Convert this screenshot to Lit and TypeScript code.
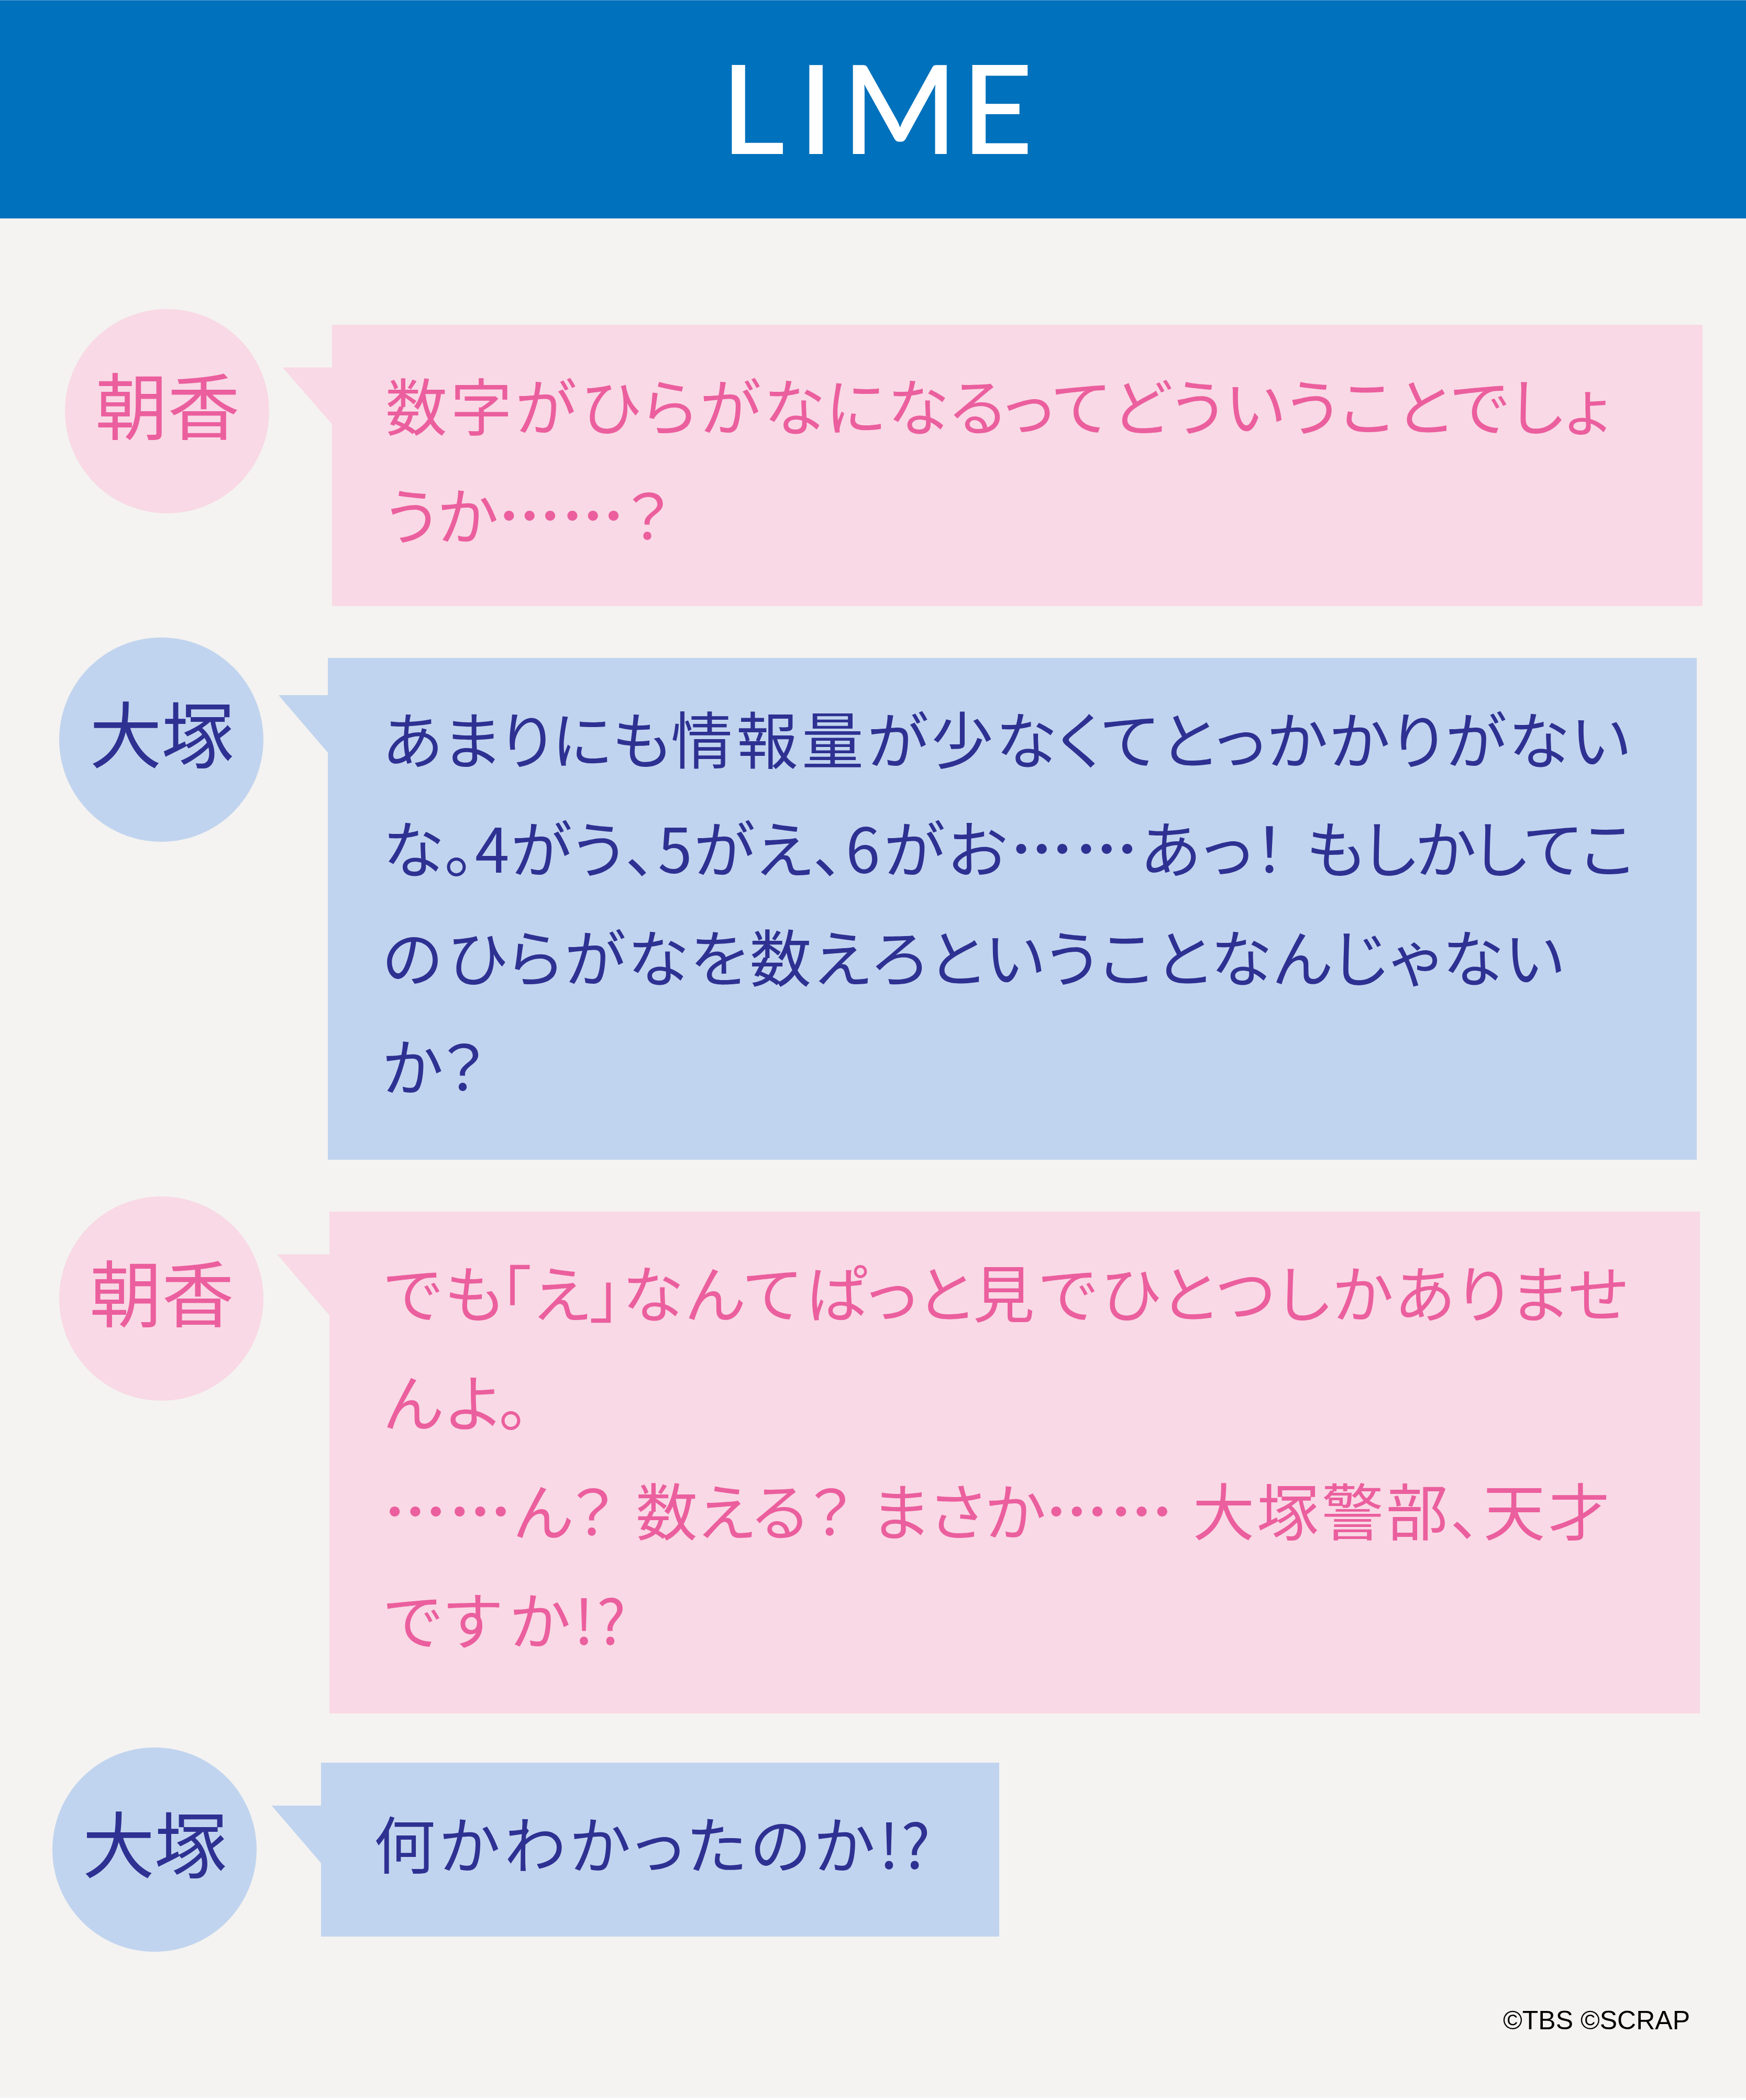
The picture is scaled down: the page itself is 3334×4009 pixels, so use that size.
import { LitElement, css, html } from "lit";
import { customElement } from "lit/decorators.js";
import { classMap } from "lit/directives/class-map.js";
import { styleMap } from "lit/directives/style-map.js";

/** A run of text and its letter spacing in px */
type Run = [text: string, tracking: number];

interface Message {
  name: string;
  tone: "pink" | "blue";
  /** space above the row, left inset of the avatar, and distance avatar -> bubble */
  above: number;
  inset: number;
  gap: number;
  /** how far the bubble starts below the avatar's top */
  drop: number;
  width: number;
  height: number;
  indent: number;
  tail: { top: number; width: number; height: number };
  lines: Run[][];
}

const TITLE: Run[] = [
  ["L", 26],
  ["I", 16],
  ["M", 7],
  ["E", 0],
];

const MESSAGES: Message[] = [
  {
    name: "朝香",
    tone: "pink",
    above: 173,
    inset: 124,
    gap: 120,
    drop: 29.5,
    width: 2617,
    height: 537.5,
    indent: 102,
    tail: { top: 81.5, width: 95, height: 109 },
    lines: [
      [
        ["数字", 6],
        ["が", 11],
        ["ひらが", 6],
        ["なにな", 3.5],
        ["る", -2],
        ["ってどういうことでしょ", 4.7],
      ],
      [
        ["うか", 2],
        ["……", 3],
        ["？", 0],
      ],
    ],
  },
  {
    name: "大塚",
    tone: "blue",
    above: 59.5,
    inset: 113,
    gap: 122.7,
    drop: 38.7,
    width: 2614.5,
    height: 958.5,
    indent: 105,
    tail: { top: 71.5, width: 94.5, height: 110 },
    lines: [
      [
        ["あまりにも", 0.7],
        ["情報量が", 7],
        ["少なくてとっかかりがない", 4.5],
      ],
      [
        ["な。", 0.7],
        ["4がう、", 2.8],
        ["5がえ、", 3],
        ["6がお", 7],
        ["……", 6],
        ["あっ", 3.8],
        ["！ ", 7],
        ["もしかしてこ", -1.1],
      ],
      [
        ["の", 11],
        ["ひらがなを数えろということなんじゃない", 4.4],
      ],
      [
        ["か", -3],
        ["？", 0],
      ],
    ],
  },
  {
    name: "朝香",
    tone: "pink",
    above: 70.3,
    inset: 113,
    gap: 126,
    drop: 28.5,
    width: 2617,
    height: 957.8,
    indent: 105,
    tail: { top: 81.5, width: 100.5, height: 117 },
    lines: [
      [
        ["で", 5.5],
        ["も", -6],
        ["「", 5],
        ["え」", 2],
        ["なんて", 6.5],
        ["ぱっと", 1.5],
        ["見で", 9.5],
        ["ひとつし", 6],
        ["かありませ", 4.2],
      ],
      [
        ["ん", 8],
        ["よ", -4],
        ["。", 0],
      ],
      [
        ["……", 6],
        ["ん", -4],
        ["？ ", 7.4],
        ["数える", 0.5],
        ["？ ", 5.5],
        ["まさか", 1.5],
        ["…… ", 5.8],
        ["大塚警部", 5.1],
        ["、", 3.5],
        ["天才", 6],
      ],
      [
        ["で", 7],
        ["す", 17],
        ["か", 8],
        ["!?", 5],
      ],
    ],
  },
  {
    name: "大塚",
    tone: "blue",
    above: 65.2,
    inset: 99.5,
    gap: 123,
    drop: 29.5,
    width: 1295.5,
    height: 332,
    indent: 101,
    tail: { top: 81.5, width: 94.5, height: 110 },
    lines: [
      [
        ["何かわかったの", 8],
        ["か", 9],
        ["!?", 4],
      ],
    ],
  },
];

const px = (n: number) => `${n}px`;

const renderRun = ([text, tracking]: Run) => html`<span
    class=${classMap({ dots: text.startsWith("…") })}
    style=${styleMap({ letterSpacing: px(tracking) })}
    >${text}</span
  >`;

/** One speaker with a speech bubble */
@customElement("chat-message")
export class ChatMessage extends LitElement {
  static override properties = { message: { attribute: false } };

  declare message: Message;

  override render() {
    const m = this.message;
    return html`
      <div
        class="row ${m.tone}"
        style=${styleMap({ paddingTop: px(m.above), paddingLeft: px(m.inset), gap: px(m.gap) })}
      >
        <div class="avatar">${m.name}</div>
        <div
          class="bubble"
          style=${styleMap({
            marginTop: px(m.drop),
            width: px(m.width),
            height: px(m.height),
            paddingLeft: px(m.indent),
          })}
        >
          <i
            class="tail"
            style=${styleMap({
              top: px(m.tail.top),
              width: px(m.tail.width),
              height: px(m.tail.height),
            })}
          ></i>
          ${m.lines.map((runs) => html`<p>${runs.map(renderRun)}</p>`)}
        </div>
      </div>
    `;
  }

  static override styles = css`
    :host {
      display: block;
    }

    .row {
      display: flex;
      align-items: flex-start;
    }

    .pink {
      --fill: #f9d9e5;
      --ink: #eb5f9e;
    }

    .blue {
      --fill: #c1d4ef;
      --ink: #2e3192;
    }

    .avatar {
      align-items: center;
      background: var(--fill);
      border-radius: 50%;
      box-sizing: border-box;
      color: var(--ink);
      display: flex;
      flex: none;
      font-size: 138px;
      height: 390px;
      justify-content: center;
      line-height: 1;
      padding: 0 0 34px 2px;
      width: 390px;
    }

    .bubble {
      background: var(--fill);
      box-sizing: border-box;
      color: var(--ink);
      flex: none;
      padding-top: 47px;
      position: relative;
    }

    .tail {
      background: var(--fill);
      clip-path: polygon(0 0, 100% 0, 100% 100%);
      position: absolute;
      right: calc(100% - 0.5px);
    }

    p {
      font-feature-settings: "palt";
      font-size: 118px;
      line-height: 208px;
      margin: 0;
      white-space: pre;
    }

    .dots {
      font-weight: 700;
    }
  `;
}

@customElement("app-root")
export class AppRoot extends LitElement {
  override render() {
    return html`
      <header><h1>${TITLE.map(renderRun)}</h1></header>
      <main>${MESSAGES.map((m) => html`<chat-message .message=${m}></chat-message>`)}</main>
      <footer>©TBS ©SCRAP</footer>
    `;
  }

  static override styles = css`
    :host {
      background: #f4f3f1;
      border-bottom: 4px solid #fff;
      box-sizing: border-box;
      display: flex;
      flex-direction: column;
      font-family: "Noto Sans CJK JP", sans-serif;
      height: 4009px;
      overflow: hidden;
      width: 3334px;
    }

    header {
      align-items: center;
      background: #0071bc;
      border-top: 1px solid #5ba3d4;
      box-sizing: border-box;
      display: flex;
      flex: none;
      height: 417.4px;
      justify-content: center;
    }

    h1 {
      color: #fff;
      font-family: Lato, sans-serif;
      font-size: 237px;
      font-weight: 500;
      line-height: 1;
      margin: 0;
      padding: 0 0 14px 15px;
    }

    main {
      flex: 1;
    }

    footer {
      color: #000;
      font: 50px/58px "Liberation Sans", sans-serif;
      padding: 0 107px 119px 0;
      text-align: right;
    }
  `;
}
